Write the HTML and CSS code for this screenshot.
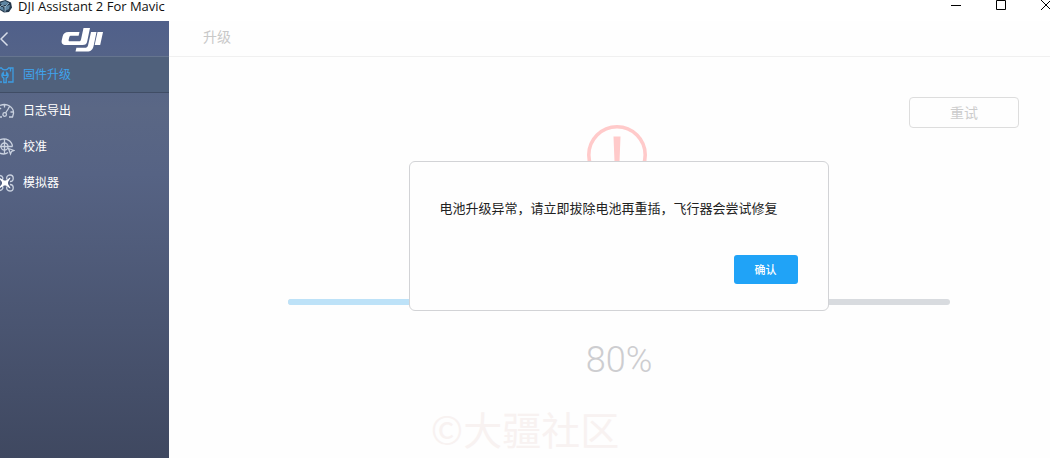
FILE: index.html
```html
<!DOCTYPE html>
<html lang="zh-CN">
<head>
<meta charset="utf-8">
<title>DJI Assistant 2 For Mavic</title>
<link rel="stylesheet" href="styles.css">
</head>
<body>
<header class="titlebar">
  <svg class="app-icon" viewBox="0 0 14 14" aria-hidden="true">
    <path d="M5.500 0L11 2.500L12 7.500L9 12L4 12.500L0 10V1.500Z" fill="#24384d"/>
    <path d="M0 3L5 1L9 3L6 5L2 5ZM5 6L10 5L9 9L5 11ZM0 7L3 7L4 11L0 9Z" fill="#5f86a3"/>
    <path d="M2 5L5 7L9 3M5 7V12M0 7L2 5" stroke="#a9c4d4" stroke-width=".8" fill="none"/>
  </svg>
  <span class="app-name">DJI Assistant 2 For Mavic</span>
  <div class="window-controls">
    <button aria-label="最小化"><svg viewBox="0 0 12 12"><path d="M1 5.500H11" /></svg></button>
    <button aria-label="最大化"><svg viewBox="0 0 12 12"><path d="M1.500 .5H10.500V9.500H1.500Z"/></svg></button>
    <button aria-label="关闭"><svg viewBox="0 0 12 12"><path d="M1 0L11 10M11 0L1 10"/></svg></button>
  </div>
</header>
<div class="app">
  <aside class="sidebar">
    <div class="brand">
      <button class="back" aria-label="返回"><svg viewBox="0 0 10 16"><path d="M7.500 1.500L1 8L7.500 14.500"/></svg></button>
      <svg class="logo" viewBox="0 0 43 26" role="img" aria-label="DJI">
        <path d="M22.500 1H29L26.300 14C25.700 17 24.500 18 21.500 18H5C1.500 18 0 16 .8 13L1.600 9.500C2.300 6.500 4 5 7.500 5H18.500L17.600 8.800H10.500C9 8.800 8.500 9.200 8.200 10.500L7.700 12.500C7.400 14 7.700 14.300 9 14.300H18C19.200 14.300 19.700 13.800 20 12.500Z"/>
        <path d="M30 5H35.500L32.700 18.500C31.800 22.500 30 24.500 26 24.500H14.500L15.400 20.800H23.500C25.700 20.800 26.500 20.300 27 18.500Z"/>
        <path d="M36.500 5H42L39.200 18H33.700Z"/>
      </svg>
    </div>
    <nav class="menu">
      <a class="item active" href="#upgrade" aria-current="page">
        <svg viewBox="0 0 15 18"><path d="M0 2H1.500C2.500 4.500 7.500 4.500 8.500 2H13V16H8M0 16H2M10.500 2V5.500M3.800 16.500V12.200C1.300 11 1.300 7.800 3.300 6.500V9.300H6.700V6.500C8.700 7.800 8.700 11 6.200 12.200V16.500Z"/></svg>
        <span>固件升级</span>
      </a>
      <a class="item" href="#logs">
        <svg viewBox="0 0 15 18"><path d="M0 3.500C7 .5 14 5 13.500 11.500L12.500 15H9M0 15H2M4.500 3V5.500M0 6L1 7M9.500 4.500L8.300 6.500M13 10H10.500M8.500 6.500L5.500 11"/><circle cx="4.700" cy="12.500" r="1.800"/></svg>
        <span>日志导出</span>
      </a>
      <a class="item" href="#calibrate">
        <svg viewBox="0 0 15 18"><path d="M0 1.800C6-.8 12 3 12.500 8.500M0 15.200C3 16.500 6 16 8 14.500M4.500 1V16M0 8.500H12.500"/><circle cx="4.500" cy="8.500" r="3.500"/><path d="M8.500 10.500L14 12.500L11.500 13.500L10.500 16Z"/></svg>
        <span>校准</span>
      </a>
      <a class="item" href="#simulator">
        <svg viewBox="0 0 15 18"><path d="M0 1.500C3 2 3.500 4.500 2 6.500M0 16.500C3 16 3.500 13.500 2 11.500M7 5.500C6 3 7.500 1 10 1C14.300 1 14.300 7.500 10 7.500M7 12.500C6 15 7.500 17 10 17C14.300 17 14.300 10.500 10 10.500"/><path class="solid" d="M0 4L4 6.500H6L10 3.500L10.500 4L8 8V10L10.500 14L10 14.500L6 11.500H4L0 14V12.500L2 10V8L0 5.500Z"/></svg>
        <span>模拟器</span>
      </a>
    </nav>
  </aside>
  <main class="main">
    <h1 class="page-title">升级</h1>
    <section class="upgrade">
      <button class="retry" disabled>重试</button>
      <svg class="alert" viewBox="0 0 60 60" aria-hidden="true"><circle cx="30" cy="30" r="28.200"/><path d="M26.500 11.500H33.500L32.500 37H27.500ZM27.500 42H32.500V47H27.500Z"/></svg>
      <div class="track" role="progressbar" aria-label="升级进度" aria-valuenow="80" aria-valuemin="0" aria-valuemax="100"><div class="fill" style="width:80%"></div></div>
      <p class="percent">80%</p>
      <div class="dialog" role="alertdialog" aria-labelledby="message">
        <p id="message" class="message">电池升级异常，请立即拔除电池再重插，飞行器会尝试修复</p>
        <button class="confirm">确认</button>
      </div>
    </section>
  </main>
</div>
<div class="watermark">©大疆社区</div>
</body>
</html>
```
FILE: styles.css
```css
* { box-sizing: border-box; }
body {
  margin: 0;
  min-height: 100vh;
  display: flex;
  flex-direction: column;
  position: relative;
  overflow: hidden;
  background: #fefefe;
  font-family: "Liberation Sans", "Noto Sans CJK SC", sans-serif;
  font-size: 12px;
}
p, h1 { margin: 0; font-weight: 400; }
button { font: inherit; padding: 0; border: 0; background: none; }
svg { display: block; flex: none; }

.titlebar { display: flex; height: 21px; background: #fff; color: #111; }
.app-icon { width: 14px; height: 14px; }
.app-name { margin-left: 4px; font: 13px/12px "Open Sans", sans-serif; white-space: nowrap; }
.window-controls { margin-left: auto; margin-right: -2px; display: flex; align-items: flex-start; gap: 33px; }
.window-controls svg { width: 12px; height: 12px; fill: none; stroke: #000; stroke-width: 1; }

.app { flex: 1; display: flex; }
.sidebar {
  flex: none;
  width: 169px;
  background: linear-gradient(#50608a, #5a6785 20%, #566384 35%, #3f4860);
  color: #fff;
}
.brand { display: flex; height: 36px; padding-top: 6px; border-bottom: 1px solid #66758f; }
.back { width: 9px; height: 24px; display: flex; align-items: center; }
.back svg { width: 10px; height: 16px; fill: none; stroke: #d8deea; stroke-width: 1.5; }
.logo { width: 43px; height: 26px; margin-left: 52px; fill: #fff; }
.item { display: flex; align-items: center; height: 36px; gap: 8px; color: #fff; text-decoration: none; line-height: 18px; }
.item svg { width: 15px; height: 18px; fill: none; stroke: #c9d1df; stroke-width: 1.3; }
.item .solid { fill: #fff; stroke: none; }
.active { background: #50617c; border-bottom: 1px solid #404d65; color: #3fa4ee; }
.active svg { stroke: #3d9de2; }

.main { flex: 1; min-width: 0; }
.page-title { height: 36px; padding-left: 34px; border-bottom: 1px solid #f0f0f0; color: #c8c8c8; font-size: 14px; line-height: 32px; }
.upgrade { position: relative; display: flex; flex-direction: column; align-items: center; padding: 40px 100px 0 119px; }
.retry { align-self: flex-end; width: 110px; height: 31px; margin-right: -69px; padding-bottom: 2px; border: 1px solid #ddd; border-radius: 4px; color: #ccc; font-size: 14px; }
.alert { width: 60px; height: 60px; margin: -3px 4px 0 0; fill: #ffcaca; }
.alert circle { fill: none; stroke: #ffcaca; stroke-width: 3.6; }
.track { width: 100%; height: 6px; margin-top: 114px; border-radius: 3px; background: #d8dbdf; overflow: hidden; }
.fill { height: 100%; background: #bde2f8; }
.percent { margin-top: 33px; color: #cdcdd0; font: 300 36px/44px Roboto, sans-serif; }
.dialog {
  position: absolute;
  top: 104px;
  left: calc(50% + 9px);
  transform: translateX(-50%);
  width: 420px;
  padding: 35px 30px 26px;
  display: flex;
  flex-direction: column;
  gap: 34px;
  background: #fefefe;
  border: 1px solid #d2d3d6;
  border-radius: 6px;
}
.message { color: #222; font-size: 13px; line-height: 24px; white-space: nowrap; }
.confirm { align-self: flex-end; width: 64px; height: 29px; padding-bottom: 1px; border-radius: 3px; background: #20a3f7; color: #fff; font-size: 11px; font-weight: 500; }
.watermark {
  position: absolute;
  bottom: 0;
  left: 0;
  right: 0;
  text-align: center;
  color: #f8f2f1;
  font: 39px/60px "Noto Sans CJK SC", sans-serif;
  pointer-events: none;
}
```
